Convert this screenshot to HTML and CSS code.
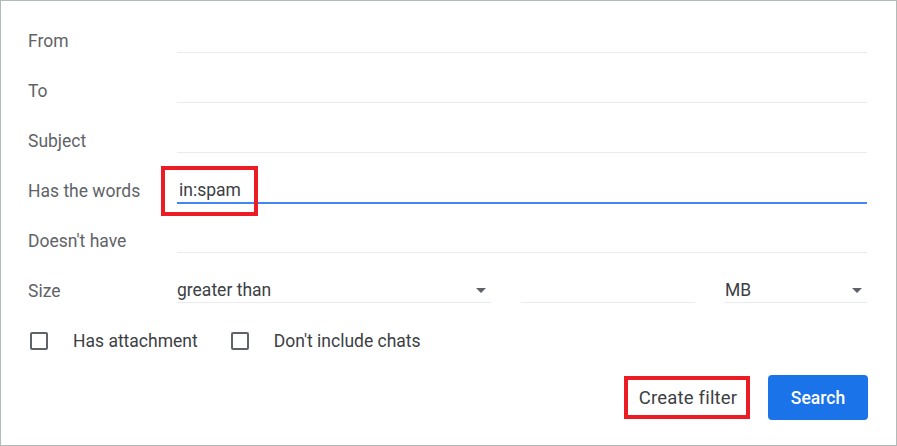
FILE: index.html
```html
<!DOCTYPE html>
<html>
<head>
<meta charset="utf-8">
<link rel="stylesheet" href="styles.css">
</head>
<body>
<div class="frame">
  <div class="form">
    <div class="row"><div class="label">From</div><div class="field"></div></div>
    <div class="row"><div class="label">To</div><div class="field"></div></div>
    <div class="row"><div class="label">Subject</div><div class="field"></div></div>
    <div class="row"><div class="label">Has the words</div><div class="field focused"><span class="mark"></span>in:spam</div></div>
    <div class="row"><div class="label">Doesn't have</div><div class="field"></div></div>
    <div class="row">
      <div class="label">Size</div>
      <div class="size">
        <div class="field select sel-op">greater than<span class="arrow"></span></div>
        <div class="field num"></div>
        <div class="field select sel-unit">MB<span class="arrow"></span></div>
      </div>
    </div>
    <div class="row checks">
      <span class="box"></span><span class="ctext">Has attachment</span>
      <span class="box"></span><span class="ctext">Don't include chats</span>
    </div>
    <div class="actions">
      <button class="btn create">Create filter</button>
      <button class="btn search">Search</button>
    </div>
  </div>
</div>
</body>
</html>
```
FILE: styles.css
```css
html, body { margin: 0; padding: 0; background: #fff; }
.frame {
  width: 895px;
  height: 444px;
  border: 1px solid #b2bbb7;
  border-bottom-width: 2px;
  background: #fff;
  font-family: Roboto, "Liberation Sans", sans-serif;
  font-size: 17.5px;
  color: #3c4043;
}
.form { padding: 15px 29px 0 27px; }
.row { display: flex; align-items: center; height: 50px; }
.label { width: 149px; flex: none; color: #5f6368; font-size: 17.5px; }
.field {
  position: relative;
  flex: 1;
  height: 24px;
  padding-top: 1px;
  line-height: 25px;
  border-bottom: 1px solid #e8eaed;
  margin-bottom: 3px;
  white-space: nowrap;
}
.focused { border-bottom-color: #4285f4; box-shadow: 0 1px 0 0 #4285f4; padding-left: 2px; }
.mark {
  position: absolute;
  left: -16px;
  top: -11px;
  width: 89px;
  height: 42px;
  border: 4px solid #ec1c24;
}
.size { flex: 1; display: flex; gap: 30px; }
.sel-op { flex: none; width: 314px; }
.num { flex: none; width: 174px; }
.sel-unit { flex: 1; }
.arrow {
  position: absolute;
  right: 5px;
  top: 11px;
  width: 0; height: 0;
  border-left: 5px solid transparent;
  border-right: 5px solid transparent;
  border-top: 5px solid #5f6368;
}
.checks { padding-left: 2px; }
.box {
  width: 14px; height: 14px;
  border: 2px solid #5f6368;
  border-radius: 2px;
  flex: none;
}
.ctext { margin-left: 25px; margin-right: 33px; }
.actions {
  display: flex;
  justify-content: flex-end;
  gap: 18px;
  margin-top: 9px;
  margin-right: -1px;
}
.btn {
  font-family: Roboto, "Liberation Sans", sans-serif;
  font-size: 17.5px;
  height: 45px;
  border-radius: 4px;
  cursor: pointer;
}
.create {
  margin-top: 1px;
  height: 43px;
  width: 126px;
  background: #fff;
  color: #3c4043;
  border: 4px solid #ec1c24;
  border-radius: 0;
  padding: 0 0 0 2px;
  font-size: 18.5px;
  letter-spacing: 0.2px;
}
.search {
  width: 100px;
  background: #1a73e8;
  color: #fff;
  border: none;
  font-weight: 500;
}
```
